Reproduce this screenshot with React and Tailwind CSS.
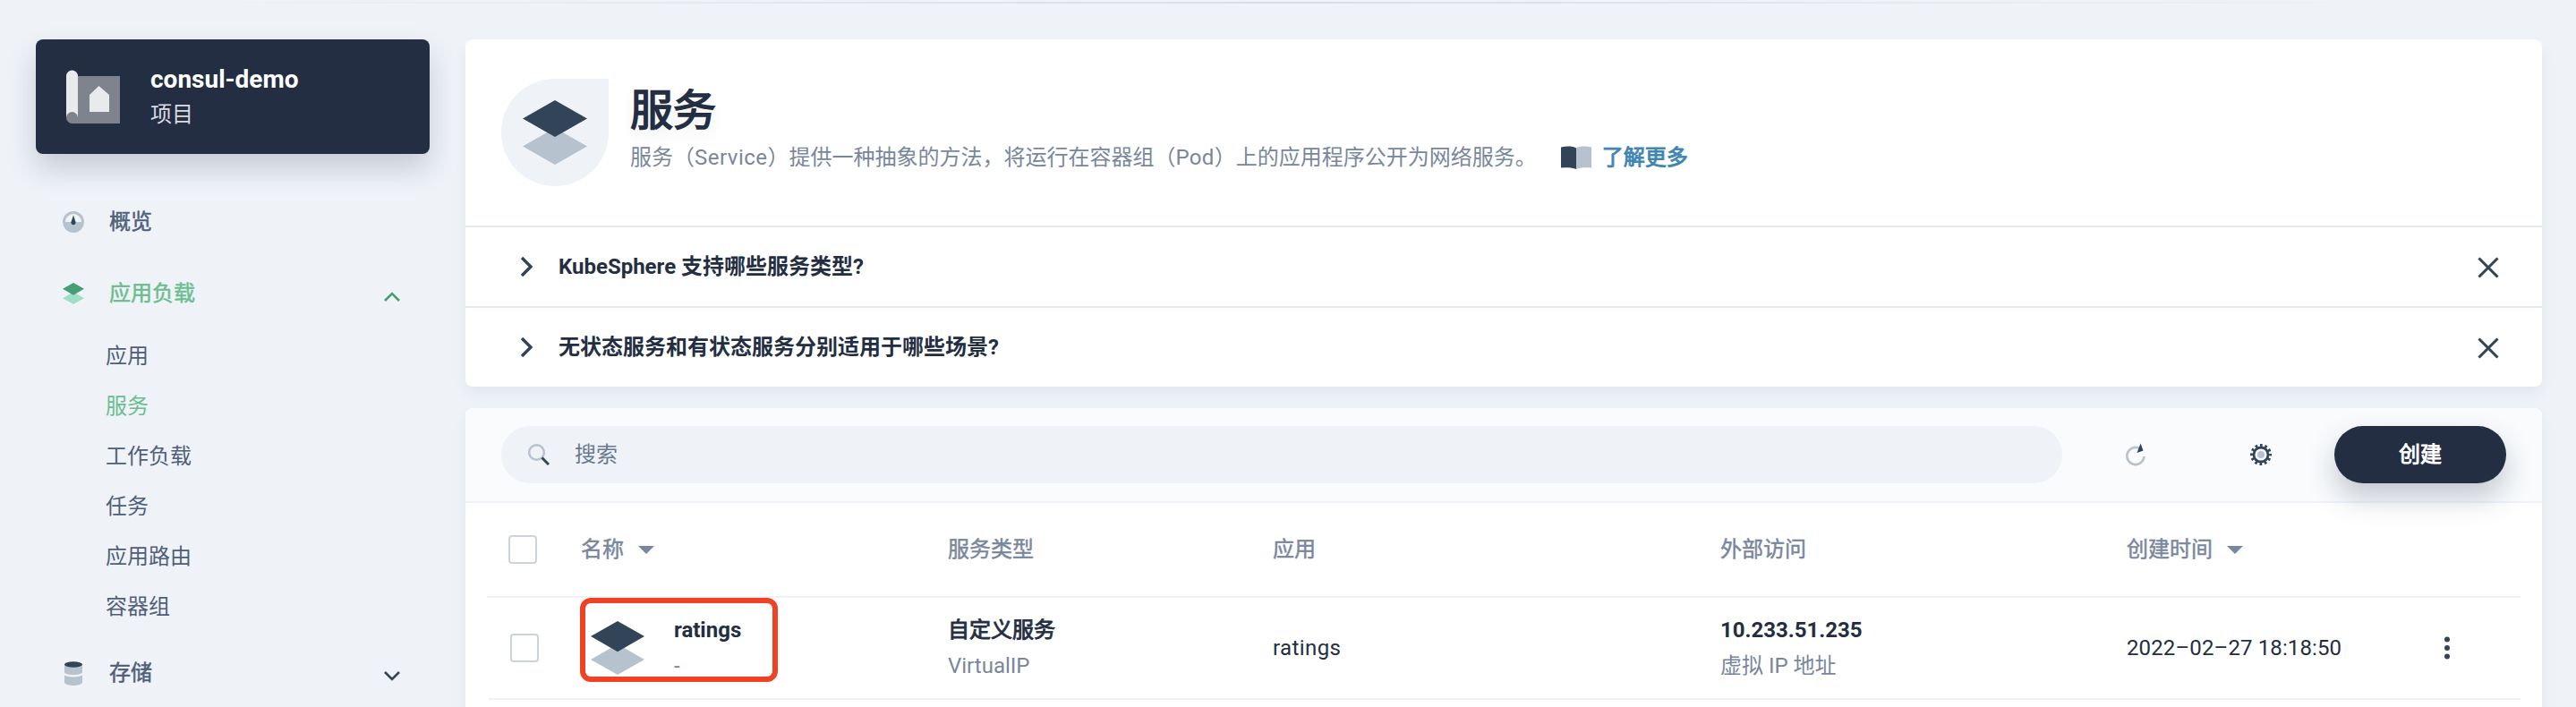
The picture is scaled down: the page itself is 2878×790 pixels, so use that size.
const LATIN_CJK = "font-['Roboto','Noto_Sans_CJK_SC',sans-serif]";

function Layers({ className, dark, light }) {
  return (
    <svg className={className} viewBox="0 0 72 72">
      <path d="M36 31 72 51.500 36 72 0 51.500Z" fill={light} />
      <path d="M36 0 72 20.500 36 41 0 20.500Z" fill={dark} />
    </svg>
  );
}

function NavRow({ icon, label, color, chevron }) {
  return (
    <div className={`flex h-20 items-center pl-[30px] pr-[33px] font-normal ${color}`}>
      <span className="flex w-6 justify-center">{icon}</span>
      <span className="ml-7 flex-1 [-webkit-text-stroke:0.5px]">{label}</span>
      {chevron && (
        <svg className="mt-[7px] h-[11px] w-[18px]" viewBox="0 0 18 11" fill="none" strokeWidth="2.600">
          {chevron === "up" ? <path d="M1 10 9 2l8 8" stroke="#479e74" /> : <path d="m1 1 8 8 8-8" stroke="#324558" />}
        </svg>
      )}
    </div>
  );
}

function Faq({ text }) {
  return (
    <div className="flex h-[90px] items-center border-t-2 border-[#e3e9ef] pl-[61px] pr-12">
      <svg className="h-6 w-4" viewBox="0 0 16 24" fill="none" stroke="#324558" strokeWidth="3.400">
        <path d="m2 2 10 10L2 22" />
      </svg>
      <span className="ml-[27px] flex-1 font-bold text-[#242e42]">{text}</span>
      <svg className="mt-px h-6 w-6" viewBox="0 0 24 24" fill="none" stroke="#324558" strokeWidth="3.100">
        <path d="m1.500 1.500 21 21m0-21-21 21" />
      </svg>
    </div>
  );
}

const Triangle = () => (
  <svg className="ml-4 h-[9px] w-[18px]" viewBox="0 0 18 9">
    <path d="M0 0h18L9 9z" fill="#79879c" />
  </svg>
);

const GRID = "grid grid-cols-[410px_363px_500px_454px_1fr]";

export default function App() {
  return (
    <div className={`${LATIN_CJK} relative flex h-[790px] w-[2878px] overflow-hidden bg-[#eff3f8] pl-10 pt-11 text-[24px] leading-[36px] text-[#4f5f79]`}>
      <div className="absolute left-0 top-[2px] h-[2px] w-full bg-linear-to-r from-[#eff3f8] from-7% via-[#d9dde3] to-[#eff3f8] to-93%" />

      <aside className="w-[440px] shrink-0">
        <div className="flex h-32 items-center rounded-lg bg-[#242e42] pl-[34px] shadow-[0_16px_32px_rgba(36,46,66,0.2)]">
          <svg className="h-[60px] w-[60px]" viewBox="0 0 60 60">
            <path d="M13 7h47v53H7V47z" fill="#7f838e" />
            <path d="M0 53V7a6.500 6.500 0 0 1 13 0v46z" fill="#e9eaec" />
            <path d="M0 53.500a6.500 6.500 0 0 1 13 0V60H6.500A6.500 6.500 0 0 1 0 53.500Z" fill="#7f838e" />
            <path d="M26 28 36.500 18 48 28v19H26z" fill="#e9eaec" />
          </svg>
          <div className="ml-[34px]">
            <div className="pt-px text-[28px] font-bold leading-10 text-white">consul-demo</div>
            <div className="-mt-px leading-10 text-[#d8dce2]">项目</div>
          </div>
        </div>

        <nav className="mt-9">
          <NavRow
            label="概览"
            color="text-[#4f5f79]"
            icon={
              <svg className="h-6 w-6" viewBox="0 0 24 24">
                <circle cx="12" cy="12" r="12" fill="#b6c2cd" />
                <path d="M3 12a9 9 0 0 1 18 0z" fill="#eff4f9" />
                <path d="M12 4.500 14.500 12a2.600 2.600 0 1 1-5 0z" fill="#324558" />
              </svg>
            }
          />
          <NavRow
            label="应用负载"
            color="text-[#6bbd90]"
            chevron="up"
            icon={<Layers className="h-6 w-6" dark="#479e74" light="#a2dec6" />}
          />
          <ul className="mt-[2px] pl-[78px]">
            <li className="h-14 leading-[56px]">应用</li>
            <li className="h-14 leading-[56px] text-[#6bbd90]">服务</li>
            <li className="h-14 leading-[56px]">工作负载</li>
            <li className="h-14 leading-[56px]">任务</li>
            <li className="h-14 leading-[56px]">应用路由</li>
            <li className="h-14 leading-[56px]">容器组</li>
          </ul>
          <div className="mt-[6px]">
            <NavRow
              label="存储"
              color="text-[#4f5f79]"
              chevron="down"
              icon={
                <svg className="h-[27px] w-5" viewBox="0 0 20 27">
                  <path d="M0 3h20v9.500c-3 3.500-17 3.500-20 0zM0 15.500c4 2.500 16 2.500 20 0V24c-3 4-17 4-20 0z" fill="#b6c2cd" />
                  <ellipse cx="10" cy="3.500" rx="10" ry="3.200" fill="#324558" />
                </svg>
              }
            />
          </div>
        </nav>
      </aside>

      <main className="ml-10 w-[2320px]">
        <section className="rounded-lg bg-white shadow-[0_8px_16px_rgba(36,46,66,0.06)]">
          <div className="flex h-[208px] pl-10 pt-11">
            <div className="flex h-[120px] w-[120px] items-center justify-center rounded-full rounded-tr-none bg-[#eff3f8]">
              <Layers className="h-[72px] w-[72px]" dark="#324558" light="#b6c2cd" />
            </div>
            <div className="ml-6">
              <h1 className="mt-1 text-[48px] font-normal leading-[64px] text-[#242e42] [-webkit-text-stroke:1.6px] [text-shadow:0_8px_16px_rgba(36,46,66,0.1)]">服务</h1>
              <div className="mt-[2px] flex items-center text-[#79879c]">
                <span>
                  服务（<span className="tracking-[0.5px]">Service</span>）提供一种抽象的方法，将运行在容器组（<span className="tracking-[0.3px]">Pod</span>）上的应用程序公开为网络服务。
                </span>
                <svg className="ml-[27px] h-[26px] w-[34px]" viewBox="0 0 34 26">
                  <path d="M0 1.500C6 0 13 0 17 2.500V26c-4-2-11-2-17-1.500z" fill="#324558" />
                  <path d="M34 1.500C28 0 21 0 17 2.500V26c4-2 11-2 17-1.500z" fill="#b6c2cd" />
                </svg>
                <span className="ml-3 font-normal text-[#3f86b0] [-webkit-text-stroke:0.9px]">了解更多</span>
              </div>
            </div>
          </div>
          <Faq text="KubeSphere 支持哪些服务类型?" />
          <Faq text="无状态服务和有状态服务分别适用于哪些场景?" />
        </section>

        <section className="mt-6 h-[360px] rounded-lg bg-white shadow-[0_8px_16px_rgba(36,46,66,0.06)]">
          <div className="flex h-[106px] items-center rounded-t-lg border-b-2 border-[#eff3f8] bg-[#f9fbfd] px-10">
            <div className="flex h-16 w-[1744px] items-center rounded-full bg-[#eff3f8] pl-[30px] text-[#6b7a92]">
              <svg className="h-6 w-6" viewBox="0 0 24 24" fill="none">
                <circle cx="9.500" cy="9.500" r="8.300" stroke="#b6c2cd" strokeWidth="2.400" />
                <path d="m15.500 15.500 7.500 7.500" stroke="#324558" strokeWidth="3" />
              </svg>
              <span className="ml-7">搜索</span>
            </div>
            <svg className="ml-[71px] h-[26px] w-6" viewBox="0 0 24 26" fill="none">
              <path d="M15 5.800A9.600 9.600 0 1 0 20.500 15" stroke="#b6c2cd" strokeWidth="2.600" />
              <path d="m16.500 0.500 3 8-7 2.500z" fill="#324558" />
            </svg>
            <svg className="ml-[115px] h-6 w-6" viewBox="0 0 24 24" fill="none">
              <circle cx="12" cy="12" r="10.500" stroke="#324558" strokeWidth="3" strokeDasharray="2.750" strokeDashoffset="1.375" />
              <circle cx="12" cy="12" r="8" stroke="#324558" strokeWidth="2.800" />
              <circle cx="12" cy="12" r="4" fill="#b6c2cd" />
            </svg>
            <button className="ml-[70px] h-16 w-48 rounded-full bg-[#242e42] text-white shadow-[0_16px_32px_rgba(36,46,66,0.25)] [-webkit-text-stroke:0.9px]">创建</button>
          </div>

          <div className="mx-6 flex h-[106px] items-center border-b-2 border-[#eff3f8] pl-6 font-normal text-[#79879c] [-webkit-text-stroke:0.5px]">
            <span className="h-8 w-8 rounded border-2 border-[#ccd3db] bg-white" />
            <div className={`${GRID} ml-[49px] flex-1`}>
              <span className="flex items-center">名称<Triangle /></span>
              <span>服务类型</span>
              <span>应用</span>
              <span>外部访问</span>
              <span className="flex items-center">创建时间<Triangle /></span>
            </div>
          </div>

          <div className="ml-[26px] mr-6 flex h-[114px] items-center border-b-2 border-[#eff3f8] pl-6">
            <span className="h-8 w-8 rounded border-2 border-[#ccd3db] bg-white" />
            <div className={`${GRID} ml-[47px] flex-1 items-center text-[#242e42]`}>
              <div className="relative flex items-center pl-[11px]">
                <div className="absolute -left-px top-[-16px] h-[94px] w-[221px] rounded-[12px] border-[6px] border-[#ef4123]" />
                <Layers className="h-[60px] w-[60px]" dark="#324558" light="#b6c2cd" />
                <div className="ml-[33px] leading-10">
                  <div className="font-bold">ratings</div>
                  <div className="text-[#79879c]">-</div>
                </div>
              </div>
              <div className="leading-10">
                <div className="[-webkit-text-stroke:0.9px]">自定义服务</div>
                <div className="text-[#79879c]">VirtualIP</div>
              </div>
              <div className="tracking-[0.4px]">ratings</div>
              <div className="leading-10">
                <div className="font-bold">10.233.51.235</div>
                <div className="text-[#79879c]">虚拟 IP 地址</div>
              </div>
              <div className="flex items-center justify-between">
                <span className="tracking-[0.12px]">2022–02–27 18:18:50</span>
                <svg className="mr-[78px] h-7 w-2" viewBox="0 0 8 28" fill="#324558">
                  <circle cx="4" cy="4.500" r="3" />
                  <circle cx="4" cy="14" r="3" />
                  <circle cx="4" cy="23.500" r="3" />
                </svg>
              </div>
            </div>
          </div>
        </section>
      </main>
    </div>
  );
}
